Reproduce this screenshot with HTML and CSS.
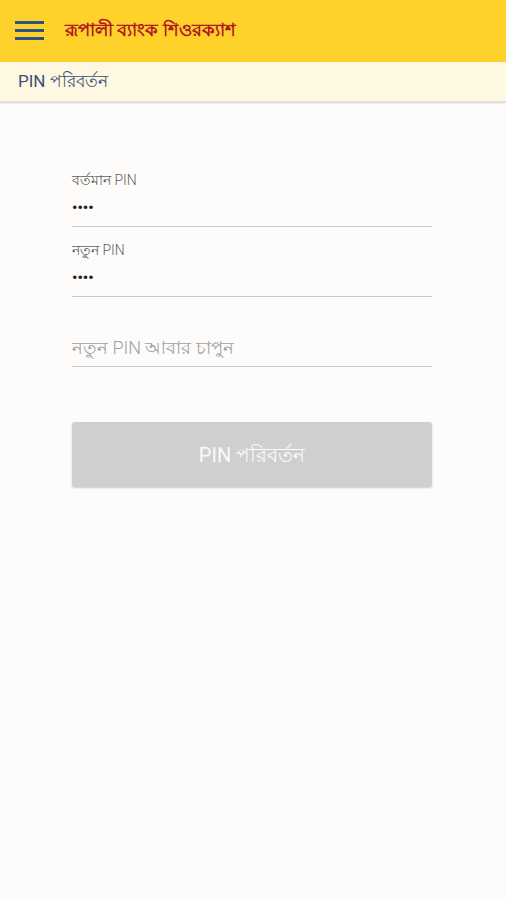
FILE: index.html
```html
<!DOCTYPE html>
<html lang="bn">
<head>
<meta charset="utf-8">
<link rel="stylesheet" href="styles.css">
</head>
<body>
<header class="appbar">
  <svg class="menu" width="30" height="22" viewBox="0 0 30 22"><rect x="0" y="1" width="29" height="3" fill="#2b5384"/><rect x="0" y="9" width="29" height="3" fill="#2b5384"/><rect x="0" y="17" width="29" height="3" fill="#2b5384"/></svg>
  <span class="title">রূপালী ব্যাংক শিওরক্যাশ</span>
</header>
<div class="subbar">PIN পরিবর্তন</div>
<main class="form">
  <div class="field">
    <div class="label">বর্তমান PIN</div>
    <div class="value">••••</div>
  </div>
  <div class="field">
    <div class="label">নতুন PIN</div>
    <div class="value">••••</div>
  </div>
  <div class="field field-empty">
    <div class="placeholder">নতুন PIN আবার চাপুন</div>
  </div>
  <button class="submit">PIN পরিবর্তন</button>
</main>
</body>
</html>
```
FILE: styles.css
```css
html, body { margin: 0; padding: 0; }
body {
  width: 506px; height: 900px;
  background: #fdfcfa;
  font-family: Roboto, "Noto Sans", "Liberation Sans", sans-serif;
  overflow: hidden;
}
.appbar {
  height: 62px;
  background: #fed12b;
  display: flex; align-items: center;
  padding-left: 15px;
  box-sizing: border-box;
}
.menu { display: block; margin-right: 20px; }
.title {
  color: #b0191e; font-size: 18px; font-weight: bold;
}
.subbar {
  height: 40px;
  background: #fef8e2;
  color: #3a5073;
  font-size: 17px;
  display: flex; align-items: center;
  padding-left: 18px;
  box-shadow: 0 1px 2px rgba(0,0,0,0.18);
  border-bottom: 1px solid #e5e0cc;
  box-sizing: border-box;
}
.form {
  padding: 70px 74px 0 72px;
  display: flex; flex-direction: column;
}
.field {
  border-bottom: 1px solid #c8c8c8;
  height: 55px;
  box-sizing: border-box;
  margin-bottom: 15px;
}
.label { font-size: 14px; color: #616161; height: 16px; line-height: 16px; font-weight: 300; }
.value { font-size: 15px; color: #222; line-height: 14px; margin-top: 13px; font-weight: bold; }
.field-empty { display: flex; align-items: flex-end; padding-bottom: 1px; }
.placeholder { font-size: 18px; color: #a0a0a0; font-weight: 300; }
.submit {
  margin-top: 40px;
  height: 65px;
  padding-top: 4px;
  border: none; border-radius: 3px;
  background: #cfcfcf;
  color: #fafafa;
  font-family: inherit;
  font-size: 20px;
  box-shadow: 0 1px 2px rgba(0,0,0,0.2);
}
```
